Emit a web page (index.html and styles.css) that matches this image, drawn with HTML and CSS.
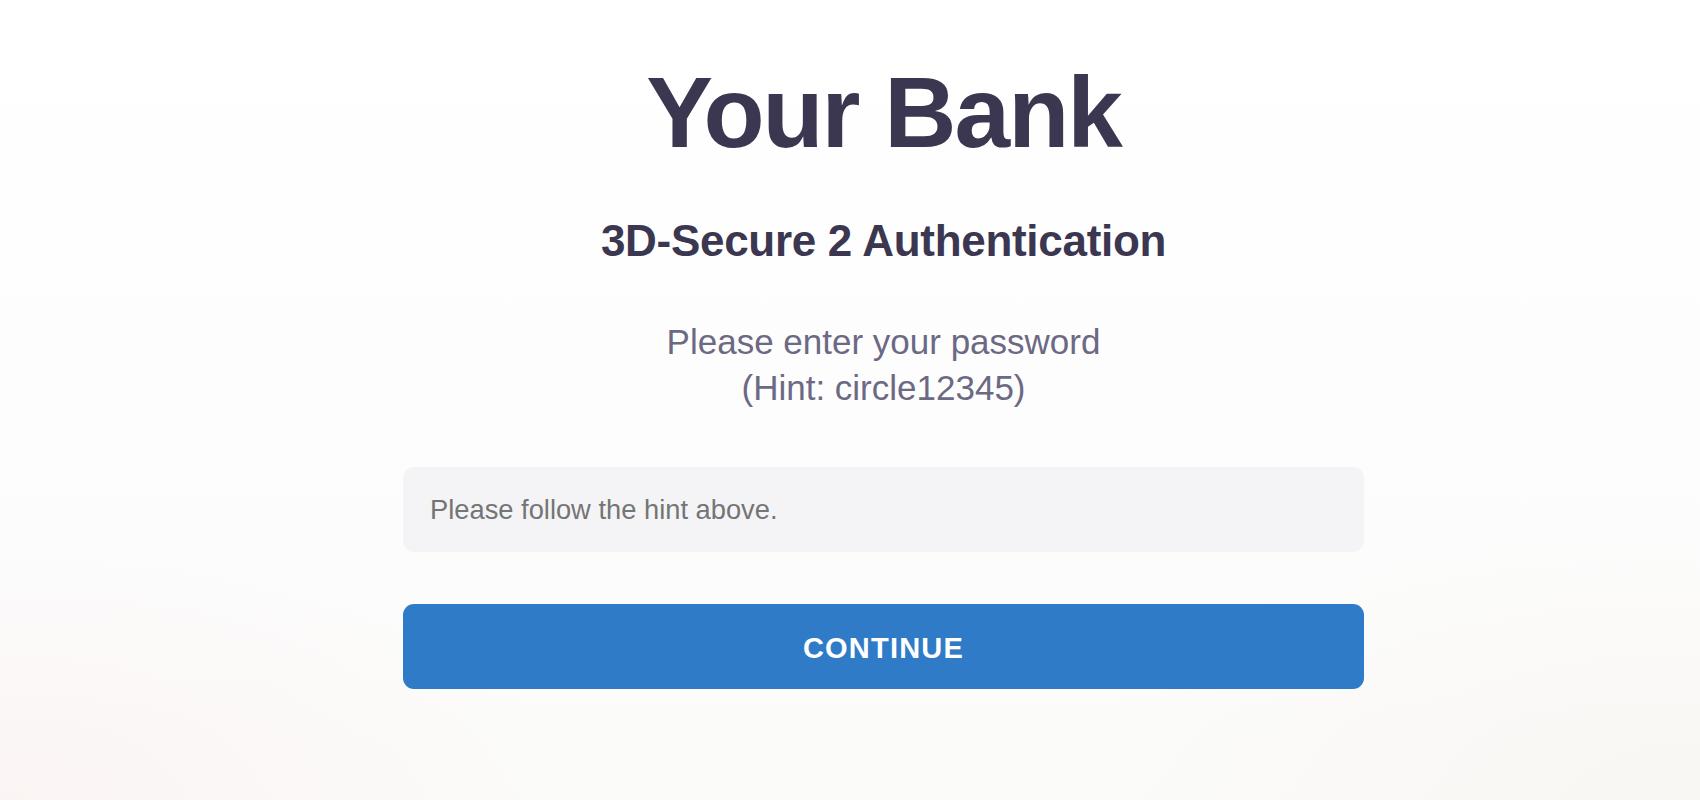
FILE: index.html
```html
<!DOCTYPE html>
<html lang="en">
<head>
<meta charset="utf-8">
<title>Your Bank - 3D-Secure 2 Authentication</title>
<link rel="stylesheet" href="styles.css">
</head>
<body>
<div class="page">
  <main class="auth">
    <h1 class="bank-name">Your Bank</h1>
    <h2 class="auth-title">3D-Secure 2 Authentication</h2>
    <p class="auth-text">Please enter your password<br>(Hint: circle12345)</p>
    <form class="auth-form">
      <input class="password-input" type="password" placeholder="Please follow the hint above.">
      <button class="continue-btn" type="button">CONTINUE</button>
    </form>
  </main>
</div>
</body>
</html>
```

FILE: styles.css
```css
html, body {
  margin: 0;
  padding: 0;
  height: 100%;
}

body {
  font-family: "Liberation Sans", Arial, Helvetica, sans-serif;
  background:
    radial-gradient(ellipse 800px 380px at 0% 100%, rgba(250, 234, 234, 0.4), rgba(255, 255, 255, 0) 70%),
    radial-gradient(ellipse 900px 400px at 100% 100%, rgba(246, 241, 234, 0.45), rgba(255, 255, 255, 0) 70%),
    linear-gradient(180deg, #ffffff 0%, #fdfdfd 50%, #fbfbfa 100%);
  min-height: 800px;
  overflow: hidden;
}

.page {
  padding-left: 67px;
  display: flex;
  justify-content: center;
}

.auth {
  width: 961px;
  display: flex;
  flex-direction: column;
  align-items: stretch;
  text-align: center;
  padding-top: 62px;
}

.bank-name {
  margin: 0;
  font-size: 100px;
  line-height: 100px;
  font-weight: 700;
  letter-spacing: -2px;
  color: #3b3751;
}

.auth-title {
  margin: 52px 0 0;
  font-size: 44px;
  line-height: 53px;
  font-weight: 700;
  letter-spacing: -0.3px;
  color: #3b3751;
}

.auth-text {
  margin: 52px 0 0;
  font-size: 35px;
  line-height: 45.5px;
  font-weight: 400;
  color: #6c6984;
}

.auth-form {
  margin: 57px 0 0;
  display: flex;
  flex-direction: column;
  gap: 52px;
}

.password-input {
  box-sizing: border-box;
  width: 100%;
  height: 85px;
  margin: 0;
  padding: 0 27px;
  border: none;
  border-radius: 11px;
  background: #f4f4f6;
  font-family: "Liberation Sans", Arial, Helvetica, sans-serif;
  font-size: 27.3px;
  color: #333333;
  outline: none;
}

.password-input::placeholder {
  color: #757575;
  opacity: 1;
}

.continue-btn {
  box-sizing: border-box;
  width: 100%;
  height: 85px;
  margin: 0;
  padding: 4px 0 0;
  border: none;
  border-radius: 11px;
  background: #2f7bc8;
  color: #ffffff;
  font-family: "Liberation Sans", Arial, Helvetica, sans-serif;
  font-size: 29px;
  font-weight: 700;
  letter-spacing: 1.2px;
  cursor: pointer;
}
```
